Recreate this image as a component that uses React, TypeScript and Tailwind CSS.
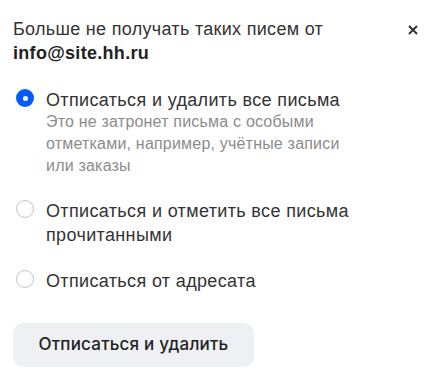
import { useState } from "react";

const options = [
  {
    id: "delete",
    label: "Отписаться и удалить все письма",
    hint: "Это не затронет письма с особыми отметками, например, учётные записи или заказы",
  },
  { id: "read", label: "Отписаться и отметить все письма прочитанными" },
  { id: "sender", label: "Отписаться от адресата" },
];

export default function App() {
  const [selected, setSelected] = useState("delete");

  return (
    <div className="w-[427px] h-[380px] bg-white font-['Liberation_Sans',Arial,sans-serif] text-[#333]">
      <div className="pl-[13px] pr-[10px] pt-[17px]">
        <div className="flex items-start justify-between">
          <h2 className="text-[18px] leading-[24px] tracking-[0.3px] font-normal">
            Больше не получать таких писем от
            <br />
            <span className="font-bold text-[#222]">info@site.hh.ru</span>
          </h2>
          <button className="mt-[8px] mr-[0px] w-[9px] h-[9px] text-[#333]" aria-label="Закрыть">
            <svg viewBox="0 0 10 10" width="10" height="10">
              <path d="M1 1L9 9M9 1L1 9" stroke="currentColor" strokeWidth="2" />
            </svg>
          </button>
        </div>

        <div className="mt-[23px] flex flex-col gap-[22px]">
          {options.map((o) => {
            const active = selected === o.id;
            return (
              <label key={o.id} className="flex items-start gap-[12px] cursor-pointer" onClick={() => setSelected(o.id)}>
                <span
                  className={`mt-[1px] ml-[3px] shrink-0 w-[18px] h-[18px] rounded-full flex items-center justify-center ${
                    active ? "bg-[#005bff]" : "border border-[#c4c4c4] bg-white"
                  }`}
                >
                  {active && <span className="w-[5px] h-[5px] rounded-full bg-white" />}
                </span>
                <span className="flex flex-col w-[320px]">
                  <span className="text-[18px] leading-[24px] tracking-[0.35px]">{o.label}</span>
                  {o.hint && (
                    <span className="text-[16px] leading-[22px] tracking-[0.2px] text-[#8c8c8c] -mt-[1px]">{o.hint}</span>
                  )}
                </span>
              </label>
            );
          })}
        </div>

        <button className="mt-[30px] w-[241px] h-[44px] rounded-[10px] bg-[#eff0f3] text-[17px] tracking-[0.2px] font-medium text-[#222] font-['Inter',sans-serif]">
          Отписаться и удалить
        </button>
      </div>
    </div>
  );
}
